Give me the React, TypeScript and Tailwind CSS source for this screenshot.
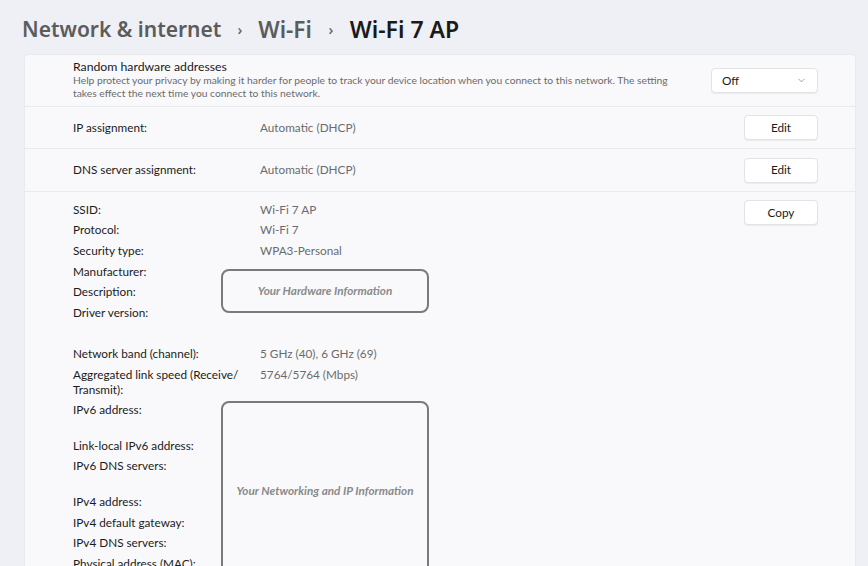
import { ChevronDown } from "lucide-react";

type Row = { label: string; value?: string; lines?: number };

const hardware: Row[] = [
  { label: "SSID:", value: "Wi-Fi 7 AP" },
  { label: "Protocol:", value: "Wi-Fi 7" },
  { label: "Security type:", value: "WPA3-Personal" },
  { label: "Manufacturer:" },
  { label: "Description:" },
  { label: "Driver version:" },
  { label: "" },
  { label: "Network band (channel):", value: "5 GHz (40), 6 GHz (69)" },
  { label: "Aggregated link speed (Receive/ Transmit):", value: "5764/5764 (Mbps)" },
  { label: "IPv6 address:", lines: 2 },
  { label: "Link-local IPv6 address:" },
  { label: "IPv6 DNS servers:", lines: 2 },
  { label: "IPv4 address:" },
  { label: "IPv4 default gateway:" },
  { label: "IPv4 DNS servers:" },
  { label: "Physical address (MAC):" },
];

function Button({ children }: { children: string }) {
  return (
    <button
      type="button"
      className="h-[25px] w-[74px] rounded-[4px] border border-[#e3e3e6] bg-white text-[11.75px] text-[#1b1b1b] shadow-[0_1px_1px_rgba(0,0,0,0.06)]"
    >
      {children}
    </button>
  );
}

function Annotation({ text, className }: { text: string; className: string }) {
  return (
    <div
      className={`absolute flex items-center justify-center rounded-[8px] border-2 border-[#7a7a7a] ${className}`}
    >
      <span className="text-[11.7px] font-bold italic text-[#8a8a8a]">{text}</span>
    </div>
  );
}

export default function App() {
  return (
    <div
      className="h-[566px] w-[868px] overflow-hidden bg-[#eef0f5] text-[#1b1b1b]"
      style={{ fontFamily: 'Lato, "Noto Sans", sans-serif' }}
    >
      {/* breadcrumb */}
      <div
        className="flex h-[54px] items-center pl-[22px] pt-[5px] text-[21px] font-semibold"
        style={{ fontFamily: '"Noto Sans", sans-serif' }}
      >
        <span className="text-[#5c5c5c]">Network &amp; internet</span>
        <span className="w-[37px] text-center text-[14px] text-[#6a6a6a]">›</span>
        <span className="text-[22.5px] text-[#5c5c5c]">Wi-Fi</span>
        <span className="w-[38px] text-center text-[14px] text-[#6a6a6a]">›</span>
        <span className="text-[23px] text-[#1a1a1a]">Wi-Fi 7 AP</span>
      </div>

      <div className="ml-[24px] w-[832px] rounded-t-[4px] border border-b-0 border-[#e9eaee] bg-[#f9f9fb]">
        {/* random hardware addresses */}
        <div className="flex h-[52px] items-center border-b border-[#eaebee] pl-[48px] pr-[37px]">
          <div className="flex-1 pb-[3px]">
            <div className="text-[12.25px] leading-[15px]">Random hardware addresses</div>
            <div className="w-[605px] text-[10.3px] leading-[13px] text-[#6b6b6b]">
              Help protect your privacy by making it harder for people to track your device
              location when you connect to this network. The setting takes effect the next time
              you connect to this network.
            </div>
          </div>
          <div className="flex h-[25px] w-[107px] items-center justify-between rounded-[4px] border border-[#e3e3e6] bg-white pl-[10px] pr-[10px] text-[11.75px] shadow-[0_1px_1px_rgba(0,0,0,0.06)]">
            <span>Off</span>
            <ChevronDown size={11} strokeWidth={1.5} className="text-[#777]" />
          </div>
        </div>

        <div className="flex h-[42px] items-center border-b border-[#eaebee] pl-[48px] pr-[37px] text-[11.75px]">
          <span className="w-[187px]">IP assignment:</span>
          <span className="flex-1 text-[#6b6b6b]">Automatic (DHCP)</span>
          <Button>Edit</Button>
        </div>

        <div className="flex h-[43px] items-center border-b border-[#eaebee] pl-[48px] pr-[37px] text-[11.75px]">
          <span className="w-[187px]">DNS server assignment:</span>
          <span className="flex-1 text-[#6b6b6b]">Automatic (DHCP)</span>
          <Button>Edit</Button>
        </div>

        {/* properties */}
        <div className="relative flex pl-[48px] pr-[37px] pt-[7px] text-[11.75px]">
          <div className="flex-1">
            {hardware.map((r, i) => (
              <div
                key={i}
                className="flex py-[2.8px] leading-[15px]"
                style={{ minHeight: 15 * (r.lines ?? 1) + 5.6 }}
              >
                <span className="w-[187px] pr-[18px]">{r.label || "\u00a0"}</span>
                <span className="text-[#6b6b6b]">{r.value}</span>
              </div>
            ))}
          </div>
          <div className="pt-[1px]">
            <Button>Copy</Button>
          </div>
          <Annotation text="Your Hardware Information" className="left-[196px] top-[77px] h-[44px] w-[208px]" />
          <Annotation text="Your Networking and IP Information" className="left-[196px] top-[209px] h-[180px] w-[208px]" />
        </div>
      </div>
    </div>
  );
}
